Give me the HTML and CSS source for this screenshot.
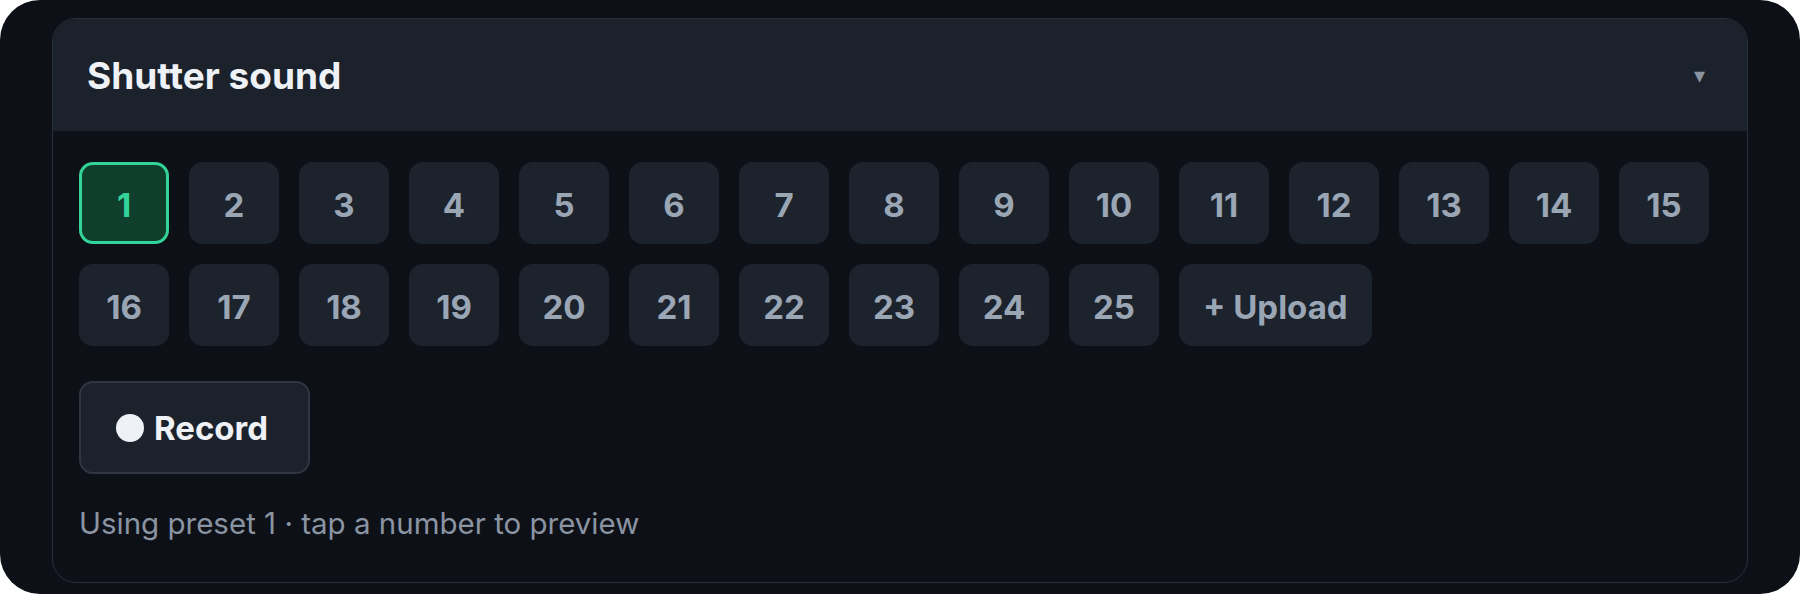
FILE: index.html
```html
<!DOCTYPE html>
<html lang="en">
<head>
    <meta charset="UTF-8">
    <meta name="viewport" content="width=device-width, initial-scale=1.0">
    <title>Shutter sound</title>
    <link rel="stylesheet" href="styles.css">
</head>
<body>
    <div class="screen">
        <div class="card">
            <div class="card-header">
                <h2>Shutter sound</h2>
                <span class="caret">&#9662;</span>
            </div>
            <div class="card-body">
                <div class="presets">
                    <button class="preset active">1</button>
                    <button class="preset">2</button>
                    <button class="preset">3</button>
                    <button class="preset">4</button>
                    <button class="preset">5</button>
                    <button class="preset">6</button>
                    <button class="preset">7</button>
                    <button class="preset">8</button>
                    <button class="preset">9</button>
                    <button class="preset">10</button>
                    <button class="preset">11</button>
                    <button class="preset">12</button>
                    <button class="preset">13</button>
                    <button class="preset">14</button>
                    <button class="preset">15</button>
                    <button class="preset">16</button>
                    <button class="preset">17</button>
                    <button class="preset">18</button>
                    <button class="preset">19</button>
                    <button class="preset">20</button>
                    <button class="preset">21</button>
                    <button class="preset">22</button>
                    <button class="preset">23</button>
                    <button class="preset">24</button>
                    <button class="preset">25</button>
                    <button class="preset upload">+ Upload</button>
                </div>
                <button class="record"><span class="dot"></span>Record</button>
                <p class="hint">Using preset 1 · tap a number to preview</p>
            </div>
        </div>
    </div>
</body>
</html>
```

FILE: styles.css
```css
body {
    margin: 0;
    padding: 0;
    background: #fff;
    font-family: 'Inter', 'Noto Sans', sans-serif;
}

.screen {
    height: 594px;
    box-sizing: border-box;
    padding: 18px 52px 11px 52px;
    background: #0d1117;
    border-radius: 40px;
}

.card {
    height: 100%;
    box-sizing: border-box;
    border: 1px solid #2a303a;
    border-radius: 24px;
    overflow: hidden;
}

.card-header {
    height: 112px;
    display: flex;
    align-items: center;
    justify-content: space-between;
    padding: 0 42px 0 34px;
    background: #1b222c;
}

.card-header h2 {
    margin: 0;
    font-size: 37px;
    font-weight: 700;
    color: #eef1f6;
}

.caret {
    color: #8b949e;
    font-size: 22px;
}

.card-body {
    padding: 31px 25px 30px 26px;
}

.presets {
    display: flex;
    flex-wrap: wrap;
    gap: 20px;
}

button {
    font-family: inherit;
    cursor: pointer;
}

.preset {
    width: 90px;
    height: 82px;
    padding: 4px 0 0;
    border: none;
    border-radius: 14px;
    background: #1c232d;
    color: #9ba6b5;
    font-size: 33px;
    font-weight: 700;
}

.preset.active {
    background: #0f3f2c;
    border: 3px solid #34d399;
    color: #34d399;
}

.preset.upload {
    width: auto;
    padding: 4px 24px 0;
}

.record {
    margin-top: 35px;
    height: 93px;
    display: flex;
    align-items: center;
    gap: 10px;
    padding: 0 40px 0 35px;
    background: #1b222c;
    border: 2px solid #2f3641;
    border-radius: 14px;
    color: #eef1f6;
    font-size: 33px;
    font-weight: 700;
}

.dot {
    width: 28px;
    height: 28px;
    border-radius: 50%;
    background: #eef1f6;
}

.hint {
    margin: 31px 0 0;
    font-size: 29.5px;
    color: #8b94a3;
}
```
